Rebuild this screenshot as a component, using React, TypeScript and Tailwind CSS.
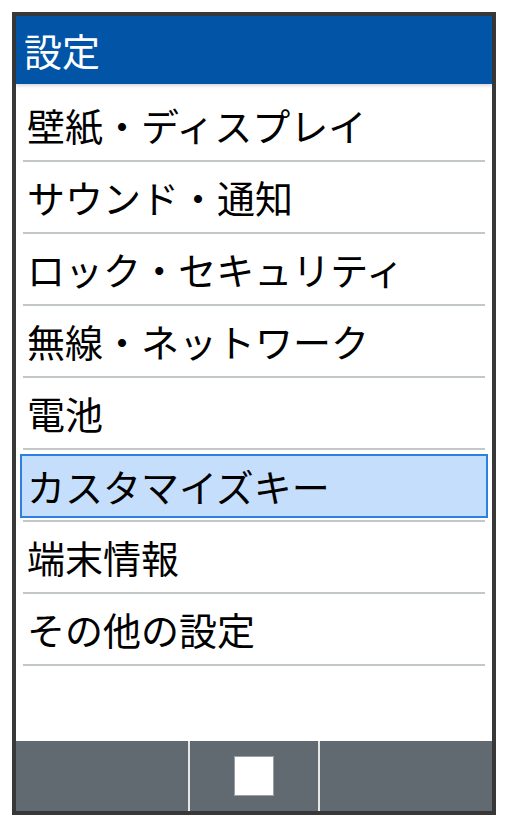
const items = [
  "壁紙・ディスプレイ",
  "サウンド・通知",
  "ロック・セキュリティ",
  "無線・ネットワーク",
  "電池",
  "カスタマイズキー",
  "端末情報",
  "その他の設定",
];

const selected = 5;

export default function App() {
  return (
    <div
      className="bg-white w-[507px] h-[826px] pt-[12px] pl-[12px]"
      style={{ fontFamily: '"Noto Sans CJK JP", "Noto Sans", sans-serif' }}
    >
      <div className="w-[484px] h-[803px] border-4 border-[#383838] flex flex-col bg-white">
        {/* header */}
        <div className="h-[68px] bg-[#0154a6] flex items-center pl-[8px] shadow-[0_2px_3px_rgba(0,0,0,0.15)] relative z-10">
          <span className="text-white text-[38px] leading-none">設定</span>
        </div>

        {/* list */}
        <div className="flex-1 flex flex-col px-[4px] pt-[6px]">
          {items.map((label, i) => (
            <div key={label} className="h-[72px] flex flex-col">
              {i === selected ? (
                <div className="flex-1 mt-[4px] mb-[2px] border-2 border-[#2f7fe0] bg-[#c5defc] flex items-center px-[5px]">
                  <span className="text-[38px] leading-none text-black">{label}</span>
                </div>
              ) : (
                <div className="flex-1 flex items-center px-[7px]">
                  <span className="text-[38px] leading-none text-black">{label}</span>
                </div>
              )}
              <div className="h-[2px] mx-[3px] bg-[#c2c8c8]" />
            </div>
          ))}
        </div>

        {/* soft keys */}
        <div className="h-[70px] bg-[#616a70] flex">
          <div className="w-[172px]" />
          <div className="w-[2px] bg-[#e6e8e8]" />
          <div className="flex-1 flex items-center justify-center">
            <div className="w-[40px] h-[40px] bg-white border border-[#9aa0a3]" />
          </div>
          <div className="w-[2px] bg-[#e6e8e8]" />
          <div className="w-[172px]" />
        </div>
      </div>
    </div>
  );
}
